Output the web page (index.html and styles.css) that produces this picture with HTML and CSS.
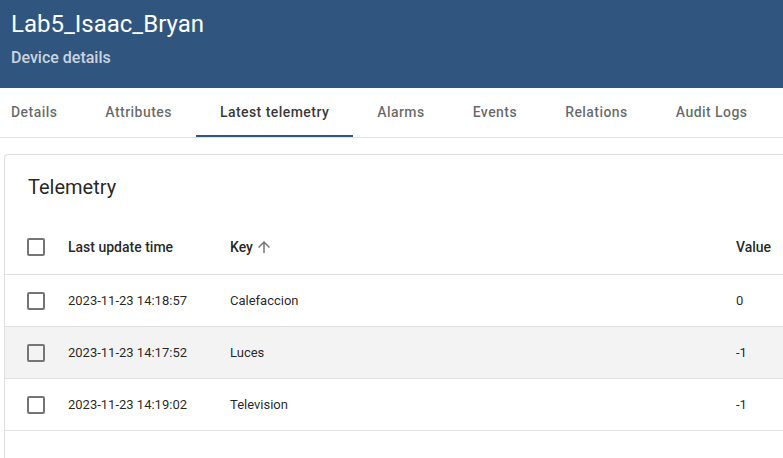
FILE: index.html
```html
<!DOCTYPE html>
<html>
<head>
<meta charset="utf-8">
<link rel="stylesheet" href="styles.css">
</head>
<body>
<header class="hdr">
  <div class="hdr-title">Lab5_Isaac_Bryan</div>
  <div class="hdr-sub">Device details</div>
</header>
<nav class="tabs">
  <div class="tab first">Details</div>
  <div class="tab">Attributes</div>
  <div class="tab active">Latest telemetry</div>
  <div class="tab">Alarms</div>
  <div class="tab">Events</div>
  <div class="tab">Relations</div>
  <div class="tab">Audit Logs</div>
</nav>
<main class="content">
  <section class="card">
    <h2 class="card-title">Telemetry</h2>
    <div class="row head">
      <div class="c-chk"><span class="chk"></span></div>
      <div class="c-time">Last update time</div>
      <div class="c-key">Key <svg class="arrow" width="18" height="18" viewBox="0 0 24 24"><path d="M4 12l1.41 1.41L11 7.83V20h2V7.83l5.58 5.59L20 12l-8-8-8 8z" fill="#757575"/></svg></div>
      <div class="c-val">Value</div>
    </div>
    <div class="row">
      <div class="c-chk"><span class="chk"></span></div>
      <div class="c-time">2023-11-23 14:18:57</div>
      <div class="c-key">Calefaccion</div>
      <div class="c-val">0</div>
    </div>
    <div class="row hover">
      <div class="c-chk"><span class="chk"></span></div>
      <div class="c-time">2023-11-23 14:17:52</div>
      <div class="c-key">Luces</div>
      <div class="c-val">-1</div>
    </div>
    <div class="row">
      <div class="c-chk"><span class="chk"></span></div>
      <div class="c-time">2023-11-23 14:19:02</div>
      <div class="c-key">Television</div>
      <div class="c-val">-1</div>
    </div>
  </section>
</main>
</body>
</html>
```
FILE: styles.css
```css
html, body {
  margin: 0;
  padding: 0;
  background: #fff;
  font-family: Roboto, "Liberation Sans", sans-serif;
  overflow: hidden;
  width: 783px;
  height: 458px;
}
.hdr {
  background: #305680;
  height: 88px;
  box-sizing: border-box;
  padding: 8px 0 0 11px;
  color: #fff;
}
.hdr-title {
  font-size: 24px;
  line-height: 32px;
  font-weight: 400;
}
.hdr-sub {
  margin-top: 8px;
  font-size: 16px;
  line-height: 20px;
  font-weight: 500;
  color: rgba(255,255,255,0.75);
}
.tabs {
  display: flex;
  height: 48px;
  border-top: 1px solid #fff;
  border-bottom: 1px solid #e0e0e0;
}
.tab {
  padding: 0 24px;
  display: flex;
  align-items: center;
  font-size: 14px;
  font-weight: 500;
  letter-spacing: 0.45px;
  color: rgba(0,0,0,0.6);
  box-sizing: border-box;
  border-bottom: 2px solid transparent;
}
.tab.first {
  padding-left: 11px;
}
.tab.active {
  color: rgba(0,0,0,0.8);
  border-bottom-color: #305680;
}
.content {
  padding: 16px 0 0 4px;
}
.card {
  border: 1px solid #e0e0e0;
  border-right: none;
  border-radius: 4px 0 0 0;
  height: 320px;
  box-sizing: border-box;
}
.card-title {
  margin: 0;
  padding: 20px 0 0 23px;
  height: 64px;
  box-sizing: border-box;
  font-size: 20px;
  line-height: 24px;
  font-weight: 400;
  color: rgba(0,0,0,0.87);
}
.row {
  display: flex;
  align-items: center;
  height: 52px;
  box-sizing: border-box;
  border-bottom: 1px solid #e0e0e0;
  font-size: 13px;
  color: rgba(0,0,0,0.87);
}
.row.head {
  height: 56px;
  font-size: 14px;
  font-weight: 500;
}
.row.hover {
  background: #f3f3f3;
}
.c-chk {
  width: 63px;
  padding-left: 22px;
  box-sizing: border-box;
  display: flex;
}
.chk {
  width: 18px;
  height: 18px;
  border: 2px solid #757575;
  border-radius: 2px;
  box-sizing: border-box;
}
.c-time {
  width: 162px;
}
.c-key {
  width: 506px;
  display: flex;
  align-items: center;
  gap: 2px;
}
.arrow {
  display: block;
}
.c-val {
  flex: none;
}
```
